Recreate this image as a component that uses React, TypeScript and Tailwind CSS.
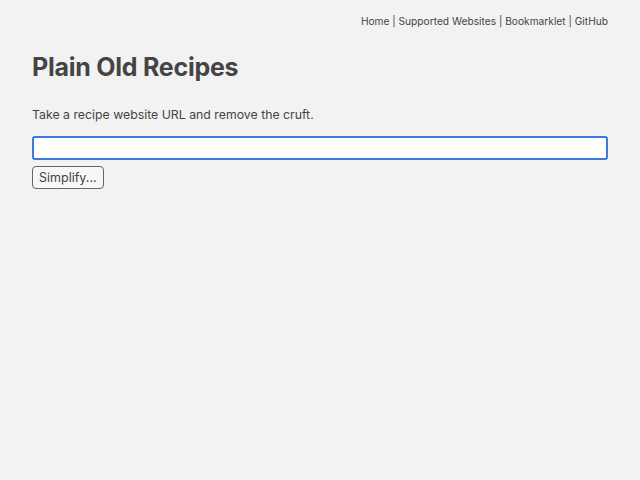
import { useState } from 'react';

export default function App() {
    const [url, setUrl] = useState('');

    return (
        <div className="min-h-screen bg-[#f2f2f2] px-8 pt-3 text-[#444] font-['Inter',sans-serif]">
            {/* nav */}
            <nav className="flex justify-end whitespace-pre text-[10.2px] leading-4 pt-[1px]">
                <a href="#">Home</a>
                <span> | </span>
                <a href="#">Supported Websites</a>
                <span> | </span>
                <a href="#">Bookmarklet</a>
                <span> | </span>
                <a href="#">GitHub</a>
            </nav>

            <h1 className="mt-[24px] text-[25px] font-bold leading-7 tracking-[-0.01em]">Plain Old Recipes</h1>

            <p className="mt-[24px] text-[12.3px] leading-5">Take a recipe website URL and remove the cruft.</p>

            <form className="mt-[11px] flex flex-col items-start gap-[6px]" onSubmit={(e) => e.preventDefault()}>
                <input
                    autoFocus
                    value={url}
                    onChange={(e) => setUrl(e.target.value)}
                    className="w-full h-[24px] rounded-[3px] border-2 border-[#3b7ae0] bg-white px-1 text-[12.5px] outline-none"
                />
                <button className="h-[23px] rounded-[4px] border border-[#666] bg-[#f7f7f7] px-[6px] text-[12.5px] leading-4 text-[#444]">
                    Simplify...
                </button>
            </form>
        </div>
    );
}
